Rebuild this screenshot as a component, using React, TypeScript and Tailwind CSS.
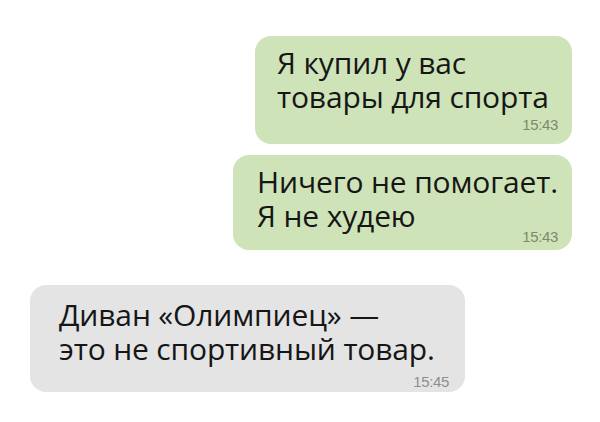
import React from "react";

type Msg = {
    lines: string[];
    time: string;
    mine: boolean;
};

const messages: Msg[] = [
    { lines: ["Я купил у вас", "товары для спорта"], time: "15:43", mine: true },
    { lines: ["Ничего не помогает.", "Я не худею"], time: "15:43", mine: true },
    { lines: ["Диван «Олимпиец» —", "это не спортивный товар."], time: "15:45", mine: false },
];

function Bubble({ msg, className, timeClass }: { msg: Msg; className: string; timeClass: string }) {
    return (
        <div className={className}>
            <p className="text-[30px] leading-[34px] text-[#161616] tracking-[-0.15px]">
                {msg.lines[0]}
                <br />
                {msg.lines[1]}
            </p>
            <div
                className={
                    "text-right text-[15px] leading-[16px] tracking-tight " +
                    (msg.mine ? "text-[#7b8b6c] " : "text-[#8e8e8e] ") +
                    timeClass
                }
                style={{ fontFamily: '"Liberation Sans", Arial, sans-serif' }}
            >
                {msg.time}
            </div>
        </div>
    );
}

export default function App() {
    return (
        <div
            className="w-[600px] h-[422px] bg-white flex flex-col pt-[36px]"
            style={{ fontFamily: '"Open Sans", "DejaVu Sans", sans-serif' }}
        >
            <div className="flex justify-end pr-[28px]">
                <Bubble
                    msg={messages[0]}
                    className="w-[317px] h-[108px] rounded-[16px] bg-[#cfe3b8] pl-[22px] pr-[14px] pt-[10px]"
                    timeClass="mt-[3px]"
                />
            </div>
            <div className="flex justify-end pr-[28px] mt-[11px]">
                <Bubble
                    msg={messages[1]}
                    className="w-[339px] h-[95px] rounded-[16px] bg-[#cfe3b8] pl-[24px] pr-[14px] pt-[10px]"
                    timeClass="-mt-[4px]"
                />
            </div>
            <div className="flex justify-start pl-[30px] mt-[35px]">
                <Bubble
                    msg={messages[2]}
                    className="w-[435px] h-[107px] rounded-[16px] bg-[#e4e4e4] pl-[29px] pr-[16px] pt-[13px]"
                    timeClass="mt-[8px]"
                />
            </div>
        </div>
    );
}
